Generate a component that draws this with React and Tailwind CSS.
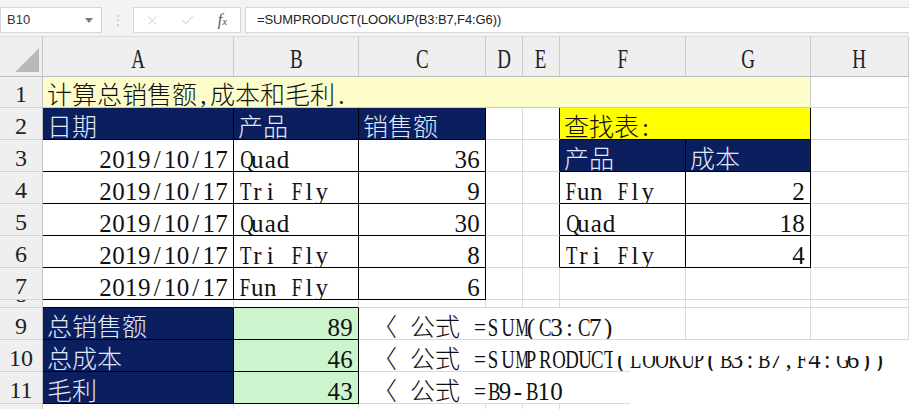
import React from "react";
import { X, Check } from "lucide-react";

const CJK = /[\u2E80-\u9FFF\u3000-\u303F\uFF00-\uFFEF]/;

function charCls(ch) {
  if (ch === "M" || ch === "W") return "inline-block scale-x-[0.6]";
  if (ch === "m" || ch === "w") return "inline-block scale-x-[0.65]";
  if (ch === "=") return "inline-block scale-x-[0.85]";
  if (/[A-Z]/.test(ch)) return "inline-block scale-x-[0.75]";
  return "";
}

function Txt({ s }) {
  const parts =
    s.match(/[\u2E80-\u9FFF\u3000-\u303F\uFF00-\uFFEF]+|[^\u2E80-\u9FFF\u3000-\u303F\uFF00-\uFFEF]+/g) || [];
  return parts.map((p, i) =>
    CJK.test(p) ? (
      <span key={i} className="font-light">{p}</span>
    ) : (
      <span key={i}>
        {Array.from(p).map((ch, j) => (
          <span key={j} className="inline-block w-[12.9px] text-center">
            <span className={charCls(ch)}>{ch === " " ? "\u00a0" : ch}</span>
          </span>
        ))}
      </span>
    )
  );
}

const G = "border-r-[#dadada] border-b-[#dadada]";
const KK = "border-r-black border-b-black";
const KR = "border-r-black border-b-[#dadada]";
const KB = "border-r-[#dadada] border-b-black";
const NAVY = "bg-[#0b1f5e] text-[#e2e9f6] border-r-black border-b-black";
const GREEN = "bg-[#cdf5cd] border-r-black border-b-black";

function C({ cls = "", t, right }) {
  return (
    <div
      className={`flex items-end overflow-hidden whitespace-nowrap border-r border-b leading-[21px] pb-[1px] ${
        right ? "justify-end pr-[5px]" : "pl-[4px]"
      } ${cls}`}
    >
      {t ? (
        <span className="relative z-20">
          <Txt s={t} />
        </span>
      ) : null}
    </div>
  );
}

function RH({ n }) {
  return (
    <div className="flex items-end justify-center overflow-hidden border-r border-b border-r-[#c4c4c4] border-b-[#d2d2d2] bg-[#efefef] font-['Liberation_Serif',serif] text-[24px] leading-[21px] text-[#222] pb-[2px]">
      {n}
    </div>
  );
}

function CH({ l }) {
  return (
    <div className="flex items-center justify-center overflow-hidden border-r border-b border-r-[#cbcbcb] border-b-[#bdbdbd] bg-[#efefef] font-['Liberation_Serif',serif] text-[28px] leading-none text-[#222] pt-[5px]">
      <span className="inline-block scale-x-[0.68]">{l}</span>
    </div>
  );
}

export default function App() {
  return (
    <div className="w-[909px] h-[409px] overflow-hidden bg-white">
      {/* formula bar */}
      <div className="flex h-[37px] items-start bg-[#f3f3f3] pt-[7px] border-b border-[#dcdcdc]">
        <div className="flex h-[26px] w-[102px] items-center justify-between border border-[#d6d6d6] bg-white pl-[6px] pr-[8px] font-['Liberation_Sans',sans-serif] text-[13px] text-[#333]">
          <span>B10</span>
          <svg width="8" height="5" viewBox="0 0 8 5">
            <polygon points="0,0 8,0 4,5" fill="#7a7a7a" />
          </svg>
        </div>
        <div className="flex h-[26px] w-[31px] flex-col items-center justify-center gap-[2.5px]">
          <span className="h-[2px] w-[2px] rounded-full bg-[#c4c4c4]" />
          <span className="h-[2px] w-[2px] rounded-full bg-[#c4c4c4]" />
          <span className="h-[2px] w-[2px] rounded-full bg-[#c4c4c4]" />
        </div>
        <div className="flex h-[26px] w-[108px] items-center border border-[#d6d6d6] bg-white">
          <div className="flex w-[36px] justify-center pl-[2px]">
            <X size={15} strokeWidth={1.4} color="#c2c2c2" />
          </div>
          <div className="flex w-[36px] justify-center">
            <Check size={15} strokeWidth={1.6} color="#c2c2c2" />
          </div>
          <div className="flex w-[36px] justify-center font-['Liberation_Serif',serif] italic text-[16px] text-[#555]">
            <span>
              f<span className="text-[11px]">x</span>
            </span>
          </div>
        </div>
        <div className="ml-[4px] flex h-[26px] flex-1 items-center border border-[#d6d6d6] border-r-0 bg-white pl-[11px] font-['Liberation_Sans',sans-serif] text-[13px] tracking-[-0.1px] text-[#222]">
          =SUMPRODUCT(LOOKUP(B3:B7,F4:G6))
        </div>
      </div>

      {/* sheet */}
      <div className="relative grid grid-cols-[43px_191px_125px_127px_37px_37px_126px_125px_1fr] grid-rows-[40px_31px_32px_32px_32px_32px_32px_32px_8px_32px_32px_32px_32px] font-['Liberation_Serif','Noto_Sans_CJK_SC',serif] text-[25px] text-[#111]">
        {/* header row */}
        <div className="relative border-r border-b border-r-[#c4c4c4] border-b-[#bdbdbd] bg-[#efefef]">
          <svg className="absolute left-0 top-0" width="43" height="40" viewBox="0 0 43 40">
            <polygon points="15,35 39,35 39,11" fill="#b9b9b9" />
          </svg>
        </div>
        <CH l="A" />
        <CH l="B" />
        <CH l="C" />
        <CH l="D" />
        <CH l="E" />
        <CH l="F" />
        <CH l="G" />
        <CH l="H" />

        {/* row 1 */}
        <RH n="1" />
        <C cls="col-span-7 bg-[#fdfdcb] border-r-[#c8c8c8] border-b-[#c8c8c8]" t="计算总销售额,成本和毛利." />
        <C cls={G} />

        {/* row 2 */}
        <RH n="2" />
        <C cls={NAVY} t="日期" />
        <C cls={NAVY} t="产品" />
        <C cls={NAVY} t="销售额" />
        <C cls={G} />
        <C cls={KR} />
        <C cls={`col-span-2 bg-[#ffff00] ${KK}`} t="查找表:" />
        <C cls={G} />

        {/* row 3 */}
        <RH n="3" />
        <C cls={KK} right t="2019/10/17" />
        <C cls={KK} t="Quad" />
        <C cls={KK} right t="36" />
        <C cls={G} />
        <C cls={KR} />
        <C cls={NAVY} t="产品" />
        <C cls={NAVY} t="成本" />
        <C cls={G} />

        {/* row 4 */}
        <RH n="4" />
        <C cls={KK} right t="2019/10/17" />
        <C cls={KK} t="Tri Fly" />
        <C cls={KK} right t="9" />
        <C cls={G} />
        <C cls={KR} />
        <C cls={KK} t="Fun Fly" />
        <C cls={KK} right t="2" />
        <C cls={G} />

        {/* row 5 */}
        <RH n="5" />
        <C cls={KK} right t="2019/10/17" />
        <C cls={KK} t="Quad" />
        <C cls={KK} right t="30" />
        <C cls={G} />
        <C cls={KR} />
        <C cls={KK} t="Quad" />
        <C cls={KK} right t="18" />
        <C cls={G} />

        {/* row 6 */}
        <RH n="6" />
        <C cls={KK} right t="2019/10/17" />
        <C cls={KK} t="Tri Fly" />
        <C cls={KK} right t="8" />
        <C cls={G} />
        <C cls={KR} />
        <C cls={KK} t="Tri Fly" />
        <C cls={KK} right t="4" />
        <C cls={G} />

        {/* row 7 */}
        <RH n="7" />
        <C cls={KK} right t="2019/10/17" />
        <C cls={KK} t="Fun Fly" />
        <C cls={KK} right t="6" />
        <C cls={G} />
        <C cls={G} />
        <C cls={G} />
        <C cls={G} />
        <C cls={G} />

        {/* row 8 (tiny) */}
        <div className="relative overflow-hidden border-r border-b border-r-[#c4c4c4] border-b-[#d2d2d2] bg-[#efefef]">
          <span className="absolute left-0 right-0 top-[-16px] text-center font-['Liberation_Serif',serif] text-[24px] leading-[21px] text-[#222]">
            8
          </span>
        </div>
        <C cls={KB} />
        <C cls={KB} />
        <C cls={G} />
        <C cls={G} />
        <C cls={G} />
        <C cls={G} />
        <C cls={G} />
        <C cls={G} />

        {/* row 9 */}
        <RH n="9" />
        <C cls={NAVY} t="总销售额" />
        <C cls={GREEN} right t="89" />
        <C cls={`col-span-4 pl-[13px] ${G}`} t="〈 公式 =SUM(C3:C7)" />
        <C cls={G} />
        <C cls={G} />

        {/* row 10 */}
        <RH n="10" />
        <C cls={NAVY} t="总成本" />
        <C cls={GREEN} right t="46" />
        <C cls={`col-span-6 pl-[13px] ${G}`} t="〈 公式 =SUMPRODUCT(LOOKUP(B3:B7,F4:G6))" />

        {/* row 11 */}
        <RH n="11" />
        <C cls={NAVY} t="毛利" />
        <C cls={GREEN} right t="43" />
        <C cls={`col-span-4 pl-[13px] ${G}`} t="〈 公式 =B9-B10" />
        <C cls={G} />
        <C cls={G} />

        {/* row 12 */}
        <RH n="12" />
        <C cls={G} />
        <C cls={G} />
        <C cls={G} />
        <C cls={G} />
        <C cls={G} />
        <C cls={G} />
        <C cls={G} />
        <C cls={G} />

        {/* rendering artefacts of the original capture */}
        <div className="absolute left-[630px] top-[319px] z-10 h-[90px] w-[279px] bg-white" />
        <div className="absolute left-[613px] top-[303px] z-30 h-[16px] w-[296px] bg-white" />
      </div>
    </div>
  );
}
